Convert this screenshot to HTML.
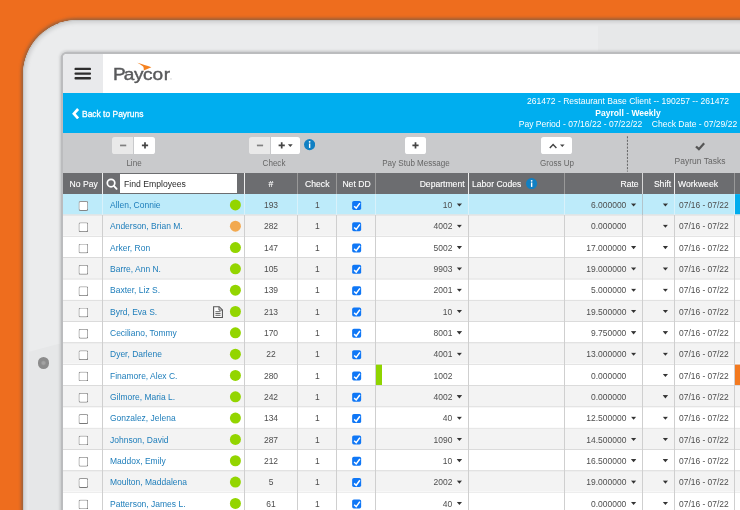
<!DOCTYPE html>
<html lang="en"><head><meta charset="utf-8"><title>Paycor Payroll</title>
<style>
html,body{margin:0;padding:0}
body{width:740px;height:510px;overflow:hidden;position:relative;background:#ee6d1e;font-family:"Liberation Sans",sans-serif;font-size:8.5px;color:#555}
#tablet{position:absolute;left:22.7px;top:19.7px;width:900px;height:700px;border-radius:55px;background:#ebeced;box-shadow:0 0 3px 1.1px rgba(110,88,72,.62), inset 0 0 0 .8px #c4c4c4, inset 0 0 3.5px 3.2px #d3d4d5}
#glare{position:absolute;left:29px;top:343.5px;width:31px;height:200px;background:#e6e7e8;clip-path:polygon(0 8.3px,100% 0,100% 100%,0 100%)}
#glare2{position:absolute;left:598.4px;top:24.6px;width:200px;height:26px;background:#e7e8e9}
#cam{position:absolute;left:37.7px;top:357.2px;width:11.6px;height:11.6px;border-radius:50%;background:radial-gradient(circle,#a4a4a4 0,#a2a2a2 16%,#8c8c8c 34%,#8c8c8c 86%,rgba(140,140,140,0) 100%)}
#screen{position:absolute;left:63.1px;top:53.5px;width:800px;height:600px;border-radius:4px 0 0 0;background:#fff;box-shadow:0 0 0 2.3px #bbbcbe, 0 0 2px 4px rgba(90,92,96,.13)}
#ham{position:absolute;left:63.1px;top:53.5px;width:39.5px;height:39.3px;background:#e9eaec;border-radius:4px 0 0 0}
#ham i{position:absolute;left:11.5px;width:16.5px;height:2.5px;background:#2e2e2e;border-radius:1px}
#logo{position:absolute;left:110px;top:58px;width:70px;height:28px;overflow:visible}
#bluebar{position:absolute;left:63px;top:92.8px;width:700px;height:39.8px;background:#00aeef;color:#fff}
#back{position:absolute;left:19.3px;top:14.8px;font-size:9.9px;white-space:nowrap;transform-origin:0 50%;transform:scaleX(0.855);line-height:12px;-webkit-text-stroke:.32px #fff}
#chev{position:absolute;left:9.3px;top:14.8px;width:8px;height:11.4px}
#info{position:absolute;left:414.8px;top:3.7px;width:300px;text-align:center;font-size:9.2px;line-height:11.3px;white-space:nowrap}
#info div{transform:scaleX(.93);transform-origin:50% 50%}
#toolbar{position:absolute;left:63px;top:132.6px;width:700px;height:40.2px;background:#c9cacc}
.btn{position:absolute;top:4.4px;height:16.6px;background:#fff;border-radius:2.6px;box-sizing:border-box}
.btn.dis{background:#e9e9e9}
.btn.l{border-radius:2.6px 0 0 2.6px}
.btn.r{border-radius:0 2.6px 2.6px 0}
.btn b{position:absolute;left:0;right:0;top:0;bottom:0}
.tl{position:absolute;top:25.6px;font-size:8.3px;color:#666;white-space:nowrap;transform:translateX(-50%) scaleX(.97);line-height:11px}
#dash{position:absolute;left:563.4px;top:0;width:3px;height:40px}
#hdr{z-index:3;position:absolute;left:63px;top:172.5px;width:700px;height:21.2px;background:#6c6d70;color:#fff;font-size:9.3px;-webkit-text-stroke:.12px #fff}
#hdr span{position:absolute;top:0;line-height:22.2px;white-space:nowrap;transform:scaleX(.925)}
#hdr span.L{transform-origin:0 50%}
#hdr span.R{transform-origin:100% 50%}
#hdr .hv{position:absolute;top:0;width:1.2px;height:21.5px;background:#999}
#find{position:absolute;left:57px;top:1.4px;width:117.2px;height:18.7px;background:#fff;color:#2a2a2a;font-size:9.2px;line-height:21.4px;padding-left:4.2px;box-sizing:border-box;-webkit-text-stroke:0;white-space:nowrap}
#find b{font-weight:normal;display:inline-block;transform:scaleX(.94);transform-origin:0 50%}
#grid{position:absolute;left:0;top:0;width:740px;height:510px;overflow:hidden}
.row{position:absolute;left:63px;top:0;width:700px;height:23px;background:#fff;box-shadow:inset 0 1px 0 #dbdbdb;line-height:23.9px;white-space:nowrap;font-size:9.2px;color:#4e4e4e}
.row.sel{box-shadow:none}
.ri{position:absolute;left:0;top:1px;width:700px;height:21.32px}
.row.alt{background:#f3f3f3}
.row.sel{background:#bdebfa}
.row span{position:absolute;top:0}
.cb{left:0;transform:translate(15.4px,6.8px);width:9.5px;height:9.5px;box-sizing:border-box;border:1px solid #787878;border-top-color:#949494;border-left-color:#949494;border-radius:2.2px;background:#fff}
.nm{left:46.8px;color:#1d7dba;transform:scaleX(.924);transform-origin:0 50%}
.dot{left:0;transform:translate(166.9px,5.3px);width:11px;height:11px;border-radius:50%}
.dot.g{background:#93d500}.dot.o{background:#f2a950}
.doc{position:absolute;left:0;top:0;transform:translate(150px,5.4px);width:10px;height:12px}
.num{left:182px;width:52px;text-align:center;transform:scaleX(.924)}
.chk{left:235px;width:38.5px;text-align:center;transform:scaleX(.924)}
.cbx{left:0;transform:translate(289.15px,6.8px);width:9.4px;height:9.4px;background:#0f77f6;border-radius:1.7px}
.cbx svg{position:absolute;left:0;top:0;width:100%;height:100%}
.dept{right:310.5px;text-align:right;transform:scaleX(.924);transform-origin:100% 50%}
.rate{right:136.8px;text-align:right;transform:scaleX(.924);transform-origin:100% 50%}
.ww{left:615.6px;transform:scaleX(.918);transform-origin:0 50%}
.car{left:0;width:6px;height:4px;background:#333;clip-path:polygon(.2px 0,5.8px 0,3px 3.3px)}
.c1{transform:translate(393.4px,9.1px)}.c2{transform:translate(567.6px,9.1px)}.c3{transform:translate(599.4px,9.1px)}
.gbar{left:313px;width:6px;height:21.3px;background:#8fd400}
.obar{left:672.2px;top:-.4px !important;width:20px;height:22.3px;background:#f37a20}
.bbar{left:672.2px;width:20px;height:21.4px;background:#00adee}
.vs{position:absolute;top:193.7px;width:1px;height:330px;background:linear-gradient(180deg,#d9f1fa 0,#d9f1fa 21.2px,#cfcfcf 21.2px)}
#wrap{position:absolute;left:0;top:0;width:740px;height:510px;overflow:hidden;will-change:transform}
.vs.g{background:#b3c4cb;height:21.2px}

</style></head>
<body>
<div id="wrap">
<div id="tablet"></div>
<div id="glare"></div>
<div id="glare2"></div>
<div id="cam"></div>
<div id="screen"></div>
<div id="ham"><svg width="39.5" height="39.1" viewBox="0 0 39.5 39.1" style="position:absolute;left:0;top:0"><g fill="#2e2e2e"><rect x="11.5" y="13.75" width="16.5" height="2.35" rx=".9"/><rect x="11.5" y="18.42" width="16.5" height="2.35" rx=".9"/><rect x="11.5" y="23.1" width="16.5" height="2.35" rx=".9"/></g></svg></div>
<svg id="logo" viewBox="0 0 70 28"><g transform="translate(3.5,0) scale(1.148,1)"><text x="-0.52 8.98 17.86 25.72 34.02 43.7" y="22.1" font-family="Liberation Sans, sans-serif" font-size="16.6" fill="#58595b" stroke="#58595b" stroke-width=".4">Paycor</text></g><path d="M27.3 4.7C32 6 37 7.6 41.4 9.3L33.7 12.6C33.9 10.9 33.7 9.6 33.1 8.5C31.4 7 29.4 5.8 27.3 4.7z" fill="#f5821f"/><text x="60.2" y="22" font-family="Liberation Sans, sans-serif" font-size="2.4" fill="#58595b">®</text></svg>
<div id="bluebar">
<svg id="chev" viewBox="0 0 8 11.4"><path d="M6.1 1L1.9 5.7l4.2 4.7" fill="none" stroke="#fff" stroke-width="2.7"/></svg>
<div id="back">Back to Payruns</div>
<div id="info"><div>261472 - Restaurant Base Client -- 190257 -- 261472</div><div><b>Payroll</b> - <b>Weekly</b></div><div>Pay Period - 07/16/22 - 07/22/22 &nbsp;&nbsp;&nbsp;Check Date - 07/29/22</div></div>
</div>
<div id="toolbar">
<div class="btn dis l" style="left:49px;width:21.3px"><svg viewBox="0 0 21 16.6" width="21.3" height="16.6"><path d="M7.9 8.45h6.2" stroke="#808080" stroke-width="1.7"/></svg></div>
<div class="btn r" style="left:70.6px;width:21px"><svg viewBox="0 0 21 16.6" width="21" height="16.6"><path d="M7.9 8.45h6.2M11 5.3v6.3" stroke="#444" stroke-width="1.7"/></svg></div>
<div class="tl" style="left:70.5px">Line</div>
<div class="btn dis l" style="left:186.2px;width:21.3px"><svg viewBox="0 0 21 16.6" width="21" height="16.6"><path d="M7.9 8.45h6.2" stroke="#808080" stroke-width="1.7"/></svg></div>
<div class="btn r" style="left:207.8px;width:28.8px"><svg viewBox="0 0 28.8 16.6" width="28.8" height="16.6"><path d="M7.6 8.45h6.2M10.7 5.3v6.3" stroke="#444" stroke-width="1.7"/><path d="M16.9 7.3h4.8l-2.4 2.7z" fill="#444"/></svg></div>
<svg style="position:absolute;left:241px;top:6.9px" width="11.2" height="11.2" viewBox="0 0 11.2 11.2"><circle cx="5.6" cy="5.6" r="5.6" fill="#1180c3"/><rect x="4.95" y="4.5" width="1.4" height="4.4" fill="#fff"/><circle cx="5.65" cy="2.8" r=".9" fill="#fff"/></svg>
<div class="tl" style="left:211px">Check</div>
<div class="btn" style="left:342px;width:21px"><svg viewBox="0 0 21 16.6" width="21" height="16.6"><path d="M7.4 8.45h6.2M10.5 5.3v6.3" stroke="#444" stroke-width="1.7"/></svg></div>
<div class="tl" style="left:352.5px">Pay Stub Message</div>
<div class="btn" style="left:478px;width:31px"><svg viewBox="0 0 31 16.6" width="31" height="16.6"><path d="M8.8 10.9l3.3-3.3l3.3 3.3" fill="none" stroke="#444" stroke-width="1.45"/><path d="M19 7.4h4.6l-2.3 2.6z" fill="#444"/></svg></div>
<div class="tl" style="left:493.5px">Gross Up</div>
<svg id="dash" viewBox="0 0 3 40"><path d="M1.45 3.3V38.6" fill="none" stroke="#505050" stroke-width=".85" stroke-dasharray="2.05 1.38"/></svg>
<svg style="position:absolute;left:631.8px;top:9.9px" width="10.2" height="8.4" viewBox="0 0 10.2 8.4"><path d="M1 4.5l2.9 2.7L9.2 1.3" fill="none" stroke="#555" stroke-width="2.3"/></svg>
<div class="tl" style="left:637.2px;top:23.4px;font-size:8.9px;transform:translateX(-50%) scaleX(.956)">Payrun Tasks</div>
</div>
<div id="hdr">
<span style="left:.5px;width:39.4px;text-align:center">No Pay</span>
<svg style="position:absolute;left:42.85px;top:5.45px" width="12.8" height="13" viewBox="0 0 10.4 10.6"><circle cx="4.1" cy="4.1" r="3.05" fill="none" stroke="#fff" stroke-width="1.4"/><path d="M6.4 6.5l2.25 2.35" stroke="#fff" stroke-width="1.5" stroke-linecap="round"/></svg>
<div id="find"><b>Find Employees</b></div>
<span style="left:182px;width:52px;text-align:center">#</span>
<span style="left:235px;width:38.5px;text-align:center">Check</span>
<span style="left:274px;width:39px;text-align:center">Net DD</span>
<span class="R" style="right:298.3px">Department</span>
<span class="L" style="left:408.8px">Labor Codes</span>
<svg style="position:absolute;left:463.4px;top:5.3px" width="11.2" height="11.2" viewBox="0 0 11.2 11.2"><circle cx="5.6" cy="5.6" r="5.6" fill="#1180c3"/><rect x="4.95" y="4.5" width="1.4" height="4.4" fill="#fff"/><circle cx="5.65" cy="2.8" r=".9" fill="#fff"/></svg>
<span class="R" style="right:124.7px">Rate</span>
<span style="left:583.5px;width:31px;text-align:center">Shift</span>
<span class="L" style="left:615px">Workweek</span>
<i class="hv" style="left:39.2px;background:#eee"></i><i class="hv" style="left:181px;background:#eee"></i><i class="hv" style="left:234px"></i><i class="hv" style="left:273px"></i><i class="hv" style="left:312.2px"></i><i class="hv" style="left:405.2px;background:#eee"></i><i class="hv" style="left:501px"></i><i class="hv" style="left:579.2px;background:#d8d8d8"></i><i class="hv" style="left:611px;background:#eee"></i><i class="hv" style="left:671.2px"></i>
</div>
<div id="grid">
<div class="row sel" style="transform:translateY(193.10px)"><div class="ri"><span class="cb"></span><span class="nm">Allen, Connie</span><span class="dot g"></span><span class="num">193</span><span class="chk">1</span><span class="cbx"><svg viewBox="0 0 9 9"><path d="M1.9 5.1L3.9 6.9L7.4 2.1" fill="none" stroke="#fff" stroke-width="1.45"/></svg></span><span class="dept">10</span><span class="car c1"></span><span class="rate">6.000000</span><span class="car c2"></span><span class="car c3"></span><span class="ww">07/16 - 07/22</span><span class="bbar"></span></div></div>
<div class="row alt" style="transform:translateY(214.42px)"><div class="ri"><span class="cb"></span><span class="nm">Anderson, Brian M.</span><span class="dot o"></span><span class="num">282</span><span class="chk">1</span><span class="cbx"><svg viewBox="0 0 9 9"><path d="M1.9 5.1L3.9 6.9L7.4 2.1" fill="none" stroke="#fff" stroke-width="1.45"/></svg></span><span class="dept">4002</span><span class="car c1"></span><span class="rate">0.000000</span><span class="car c3"></span><span class="ww">07/16 - 07/22</span></div></div>
<div class="row" style="transform:translateY(235.74px)"><div class="ri"><span class="cb"></span><span class="nm">Arker, Ron</span><span class="dot g"></span><span class="num">147</span><span class="chk">1</span><span class="cbx"><svg viewBox="0 0 9 9"><path d="M1.9 5.1L3.9 6.9L7.4 2.1" fill="none" stroke="#fff" stroke-width="1.45"/></svg></span><span class="dept">5002</span><span class="car c1"></span><span class="rate">17.000000</span><span class="car c2"></span><span class="car c3"></span><span class="ww">07/16 - 07/22</span></div></div>
<div class="row alt" style="transform:translateY(257.06px)"><div class="ri"><span class="cb"></span><span class="nm">Barre, Ann N.</span><span class="dot g"></span><span class="num">105</span><span class="chk">1</span><span class="cbx"><svg viewBox="0 0 9 9"><path d="M1.9 5.1L3.9 6.9L7.4 2.1" fill="none" stroke="#fff" stroke-width="1.45"/></svg></span><span class="dept">9903</span><span class="car c1"></span><span class="rate">19.000000</span><span class="car c2"></span><span class="car c3"></span><span class="ww">07/16 - 07/22</span></div></div>
<div class="row" style="transform:translateY(278.38px)"><div class="ri"><span class="cb"></span><span class="nm">Baxter, Liz S.</span><span class="dot g"></span><span class="num">139</span><span class="chk">1</span><span class="cbx"><svg viewBox="0 0 9 9"><path d="M1.9 5.1L3.9 6.9L7.4 2.1" fill="none" stroke="#fff" stroke-width="1.45"/></svg></span><span class="dept">2001</span><span class="car c1"></span><span class="rate">5.000000</span><span class="car c2"></span><span class="car c3"></span><span class="ww">07/16 - 07/22</span></div></div>
<div class="row alt" style="transform:translateY(299.70px)"><div class="ri"><span class="cb"></span><span class="nm">Byrd, Eva S.</span><svg class="doc" viewBox="0 0 10 12"><path d="M0.6 0.6h5.6l3.2 3.2v7.6h-8.8z" fill="#fff" stroke="#555" stroke-width="1.1"/><path d="M6 0.8v3.2h3.2" fill="none" stroke="#555" stroke-width="1"/><path d="M2.4 5.6h5.2M2.4 7.4h5.2M2.4 9.2h5.2" stroke="#555" stroke-width="0.9"/></svg><span class="dot g"></span><span class="num">213</span><span class="chk">1</span><span class="cbx"><svg viewBox="0 0 9 9"><path d="M1.9 5.1L3.9 6.9L7.4 2.1" fill="none" stroke="#fff" stroke-width="1.45"/></svg></span><span class="dept">10</span><span class="car c1"></span><span class="rate">19.500000</span><span class="car c2"></span><span class="car c3"></span><span class="ww">07/16 - 07/22</span></div></div>
<div class="row" style="transform:translateY(321.02px)"><div class="ri"><span class="cb"></span><span class="nm">Ceciliano, Tommy</span><span class="dot g"></span><span class="num">170</span><span class="chk">1</span><span class="cbx"><svg viewBox="0 0 9 9"><path d="M1.9 5.1L3.9 6.9L7.4 2.1" fill="none" stroke="#fff" stroke-width="1.45"/></svg></span><span class="dept">8001</span><span class="car c1"></span><span class="rate">9.750000</span><span class="car c2"></span><span class="car c3"></span><span class="ww">07/16 - 07/22</span></div></div>
<div class="row alt" style="transform:translateY(342.34px)"><div class="ri"><span class="cb"></span><span class="nm">Dyer, Darlene</span><span class="dot g"></span><span class="num">22</span><span class="chk">1</span><span class="cbx"><svg viewBox="0 0 9 9"><path d="M1.9 5.1L3.9 6.9L7.4 2.1" fill="none" stroke="#fff" stroke-width="1.45"/></svg></span><span class="dept">4001</span><span class="car c1"></span><span class="rate">13.000000</span><span class="car c2"></span><span class="car c3"></span><span class="ww">07/16 - 07/22</span></div></div>
<div class="row" style="transform:translateY(363.66px)"><div class="ri"><span class="cb"></span><span class="nm">Finamore, Alex C.</span><span class="dot g"></span><span class="num">280</span><span class="chk">1</span><span class="cbx"><svg viewBox="0 0 9 9"><path d="M1.9 5.1L3.9 6.9L7.4 2.1" fill="none" stroke="#fff" stroke-width="1.45"/></svg></span><span class="gbar"></span><span class="obar"></span><span class="dept">1002</span><span class="rate">0.000000</span><span class="car c3"></span><span class="ww">07/16 - 07/22</span></div></div>
<div class="row alt" style="transform:translateY(384.98px)"><div class="ri"><span class="cb"></span><span class="nm">Gilmore, Maria L.</span><span class="dot g"></span><span class="num">242</span><span class="chk">1</span><span class="cbx"><svg viewBox="0 0 9 9"><path d="M1.9 5.1L3.9 6.9L7.4 2.1" fill="none" stroke="#fff" stroke-width="1.45"/></svg></span><span class="dept">4002</span><span class="car c1"></span><span class="rate">0.000000</span><span class="car c3"></span><span class="ww">07/16 - 07/22</span></div></div>
<div class="row" style="transform:translateY(406.30px)"><div class="ri"><span class="cb"></span><span class="nm">Gonzalez, Jelena</span><span class="dot g"></span><span class="num">134</span><span class="chk">1</span><span class="cbx"><svg viewBox="0 0 9 9"><path d="M1.9 5.1L3.9 6.9L7.4 2.1" fill="none" stroke="#fff" stroke-width="1.45"/></svg></span><span class="dept">40</span><span class="car c1"></span><span class="rate">12.500000</span><span class="car c2"></span><span class="car c3"></span><span class="ww">07/16 - 07/22</span></div></div>
<div class="row alt" style="transform:translateY(427.62px)"><div class="ri"><span class="cb"></span><span class="nm">Johnson, David</span><span class="dot g"></span><span class="num">287</span><span class="chk">1</span><span class="cbx"><svg viewBox="0 0 9 9"><path d="M1.9 5.1L3.9 6.9L7.4 2.1" fill="none" stroke="#fff" stroke-width="1.45"/></svg></span><span class="dept">1090</span><span class="car c1"></span><span class="rate">14.500000</span><span class="car c2"></span><span class="car c3"></span><span class="ww">07/16 - 07/22</span></div></div>
<div class="row" style="transform:translateY(448.94px)"><div class="ri"><span class="cb"></span><span class="nm">Maddox, Emily</span><span class="dot g"></span><span class="num">212</span><span class="chk">1</span><span class="cbx"><svg viewBox="0 0 9 9"><path d="M1.9 5.1L3.9 6.9L7.4 2.1" fill="none" stroke="#fff" stroke-width="1.45"/></svg></span><span class="dept">10</span><span class="car c1"></span><span class="rate">16.500000</span><span class="car c2"></span><span class="car c3"></span><span class="ww">07/16 - 07/22</span></div></div>
<div class="row alt" style="transform:translateY(470.26px)"><div class="ri"><span class="cb"></span><span class="nm">Moulton, Maddalena</span><span class="dot g"></span><span class="num">5</span><span class="chk">1</span><span class="cbx"><svg viewBox="0 0 9 9"><path d="M1.9 5.1L3.9 6.9L7.4 2.1" fill="none" stroke="#fff" stroke-width="1.45"/></svg></span><span class="dept">2002</span><span class="car c1"></span><span class="rate">19.000000</span><span class="car c2"></span><span class="car c3"></span><span class="ww">07/16 - 07/22</span></div></div>
<div class="row" style="transform:translateY(491.58px)"><div class="ri"><span class="cb"></span><span class="nm">Patterson, James L.</span><span class="dot g"></span><span class="num">61</span><span class="chk">1</span><span class="cbx"><svg viewBox="0 0 9 9"><path d="M1.9 5.1L3.9 6.9L7.4 2.1" fill="none" stroke="#fff" stroke-width="1.45"/></svg></span><span class="dept">40</span><span class="car c1"></span><span class="rate">0.000000</span><span class="car c2"></span><span class="car c3"></span><span class="ww">07/16 - 07/22</span></div></div>
<div class="vs" style="left:101.9px"></div><div class="vs" style="left:244.0px"></div><div class="vs" style="left:297.0px"></div><div class="vs" style="left:335.9px"></div><div class="vs" style="left:375.1px"></div><div class="vs" style="left:468.1px"></div><div class="vs" style="left:564.0px"></div><div class="vs" style="left:642.1px"></div><div class="vs" style="left:674.0px"></div><div class="vs" style="left:734.1px"></div><div class="vs g" style="left:642.1px"></div>
</div>
</div>
</body></html>
